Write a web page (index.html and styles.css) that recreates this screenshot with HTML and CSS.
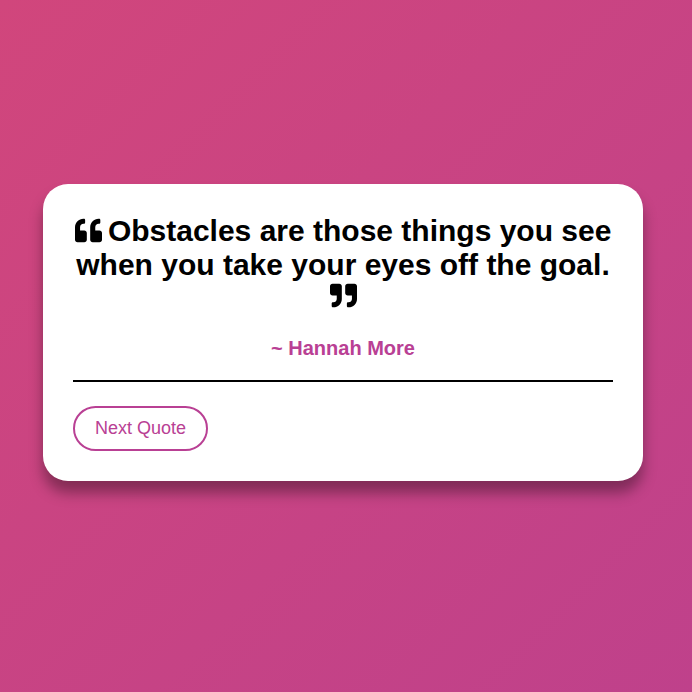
FILE: index.html
```html
<!DOCTYPE html>
<html lang="en">
<head>
<meta charset="utf-8">
<title>Random Quote</title>
<link rel="stylesheet" href="styles.css">
</head>
<body>
<main class="card">
  <h1 class="quote"><svg class="mark mark-open" viewBox="0 0 512 512" aria-hidden="true"><path d="M464 256h-80v-64c0-35.300 28.700-64 64-64h8c13.300 0 24-10.700 24-24V56c0-13.300-10.700-24-24-24h-8c-88.400 0-160 71.600-160 160v240c0 26.500 21.500 48 48 48h128c26.500 0 48-21.500 48-48V304c0-26.500-21.500-48-48-48zm-288 0H96v-64c0-35.300 28.700-64 64-64h8c13.300 0 24-10.700 24-24V56c0-13.300-10.700-24-24-24h-8C71.600 32 0 103.600 0 192v240c0 26.500 21.500 48 48 48h128c26.500 0 48-21.500 48-48V304c0-26.500-21.500-48-48-48z"/></svg> Obstacles are those things you see when you take your eyes off the goal. <svg class="mark mark-close" viewBox="0 0 512 512" aria-hidden="true"><path d="M464 32H336c-26.500 0-48 21.500-48 48v128c0 26.500 21.500 48 48 48h80v64c0 35.300-28.700 64-64 64h-8c-13.300 0-24 10.700-24 24v48c0 13.300 10.700 24 24 24h8c88.400 0 160-71.600 160-160V80c0-26.500-21.500-48-48-48zm-288 0H48C21.500 32 0 53.500 0 80v128c0 26.500 21.500 48 48 48h80v64c0 35.300-28.700 64-64 64h-8c-13.300 0-24 10.700-24 24v48c0 13.300 10.700 24 24 24h8c88.400 0 160-71.600 160-160V80c0-26.500-21.500-48-48-48z"/></svg></h1>
  <p class="author">~ Hannah More</p>
  <hr class="rule">
  <button class="next" type="button">Next Quote</button>
</main>
</body>
</html>
```
FILE: styles.css
```css
* { box-sizing: border-box; }
body {
  margin: 0;
  padding: 0 6px 27px 0;
  min-height: 100vh;
  display: flex;
  align-items: center;
  justify-content: center;
  font-family: "Liberation Sans", Arial, sans-serif;
  background: linear-gradient(to bottom right, #d1467c, #bf418b);
}
.card {
  width: 100%;
  max-width: 600px;
  padding: 30px;
  border-radius: 25px;
  background: #fff;
  box-shadow: 0 12px 14px rgba(0, 0, 0, 0.35);
}
.quote {
  margin: 0;
  font-size: 30px;
  font-weight: bold;
  line-height: 34px;
  text-align: center;
}
.mark {
  width: 27px;
  height: 27px;
}
.mark-open {
  margin-right: -2px;
  vertical-align: -3px;
}
.mark-close {
  vertical-align: 0;
}
.author {
  margin: 21px 0 20px;
  font-size: 20px;
  font-weight: bold;
  line-height: 23px;
  text-align: center;
  color: #b94094;
}
.rule {
  margin: 0 0 24px;
  border: 0;
  height: 2px;
  background: #000;
}
.next {
  display: block;
  padding: 10px 20px;
  border: 2px solid #b94094;
  border-radius: 25px;
  background: #fff;
  font: 18px/21px "Liberation Sans", Arial, sans-serif;
  color: #b94094;
  cursor: pointer;
}
```
